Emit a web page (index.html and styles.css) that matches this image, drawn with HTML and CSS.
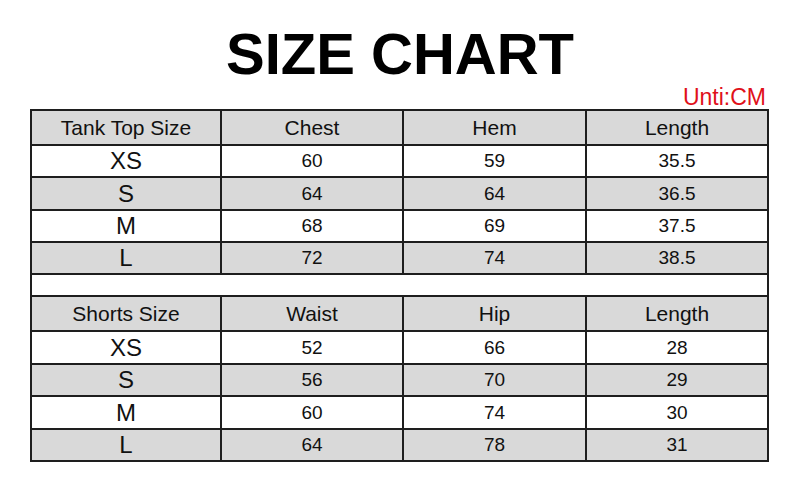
FILE: index.html
```html
<!DOCTYPE html>
<html>
<head>
<meta charset="utf-8">
<title>Size Chart</title>
<link rel="stylesheet" href="styles.css">
</head>
<body>
<div class="page">
  <h1 class="title">SIZE CHART</h1>
  <div class="unit">Unti:CM</div>
  <table class="chart">
    <colgroup>
      <col class="c1"><col class="c2"><col class="c3"><col class="c4">
    </colgroup>
    <tr class="head"><td>Tank Top Size</td><td>Chest</td><td>Hem</td><td>Length</td></tr>
    <tr class="row"><td class="size">XS</td><td>60</td><td>59</td><td>35.5</td></tr>
    <tr class="row alt h33"><td class="size">S</td><td>64</td><td>64</td><td>36.5</td></tr>
    <tr class="row"><td class="size">M</td><td>68</td><td>69</td><td>37.5</td></tr>
    <tr class="row alt"><td class="size">L</td><td>72</td><td>74</td><td>38.5</td></tr>
    <tr class="blank"><td colspan="4"></td></tr>
    <tr class="head"><td>Shorts Size</td><td>Waist</td><td>Hip</td><td>Length</td></tr>
    <tr class="row h33"><td class="size">XS</td><td>52</td><td>66</td><td>28</td></tr>
    <tr class="row alt"><td class="size">S</td><td>56</td><td>70</td><td>29</td></tr>
    <tr class="row h33"><td class="size">M</td><td>60</td><td>74</td><td>30</td></tr>
    <tr class="row alt"><td class="size">L</td><td>64</td><td>78</td><td>31</td></tr>
  </table>
</div>
</body>
</html>
```
FILE: styles.css
```css
html, body {
  margin: 0;
  padding: 0;
  background: #ffffff;
}
body {
  font-family: "Liberation Sans", Arial, sans-serif;
  color: #111111;
}
.page {
  width: 800px;
  height: 480px;
  padding-top: 25px;
  box-sizing: border-box;
}
.title {
  margin: 0;
  font-size: 58px;
  line-height: 58px;
  font-weight: bold;
  text-align: center;
  color: #000;
  letter-spacing: 0;
}
.unit {
  margin-top: 3px;
  padding-right: 34px;
  text-align: right;
  font-size: 23px;
  line-height: 23px;
  color: #e0101a;
}
.chart {
  margin-left: 30px;
  border-collapse: collapse;
  table-layout: fixed;
  width: 737px;
}
.c1 { width: 190px; }
.c2 { width: 182px; }
.c3 { width: 183px; }
.c4 { width: 182px; }
.chart td {
  border: 2px solid #1e1e1e;
  padding: 0;
  text-align: center;
  vertical-align: middle;
  font-size: 19px;
  color: #111;
}
.head td {
  background: #d9d9d9;
  height: 33px;
  font-size: 21px;
}
.row td {
  height: 30px;
  background: #ffffff;
}
.row.h33 td {
  height: 31px;
}
.row.alt td {
  background: #d9d9d9;
}
.chart td.size {
  font-size: 24px;
}
.blank td {
  height: 20px;
  background: #ffffff;
}
```
